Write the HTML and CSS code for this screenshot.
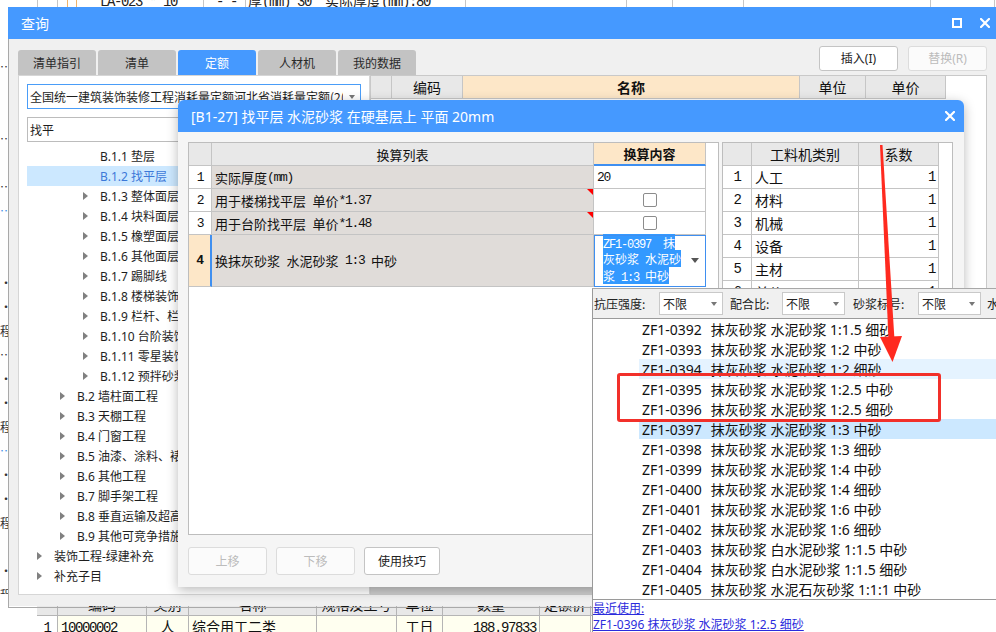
FILE: index.html
```html
<!DOCTYPE html>
<html lang="zh-CN">
<head>
<meta charset="utf-8">
<title>查询</title>
<link rel="stylesheet" href="styles.css">
</head>
<body>
<div class="app">
  <div class="topstrip">
    <div class="toprow">
      <div class="tc t1"></div>
      <div class="tc t2"></div>
      <div class="tc t3 orange"></div>
      <div class="tc t4 orange"></div>
      <div class="tc t5"><span class="m">LA-023 * 10</span></div>
      <div class="tc t6"><span class="m">- -</span></div>
      <div class="tc t7">厚<span class="m">(mm) 30  </span>实际厚度<span class="m">(mm):80</span></div>
      <div class="tc t8"></div>
      <div class="tc t9"></div>
      <div class="tc t10"></div>
      <div class="tc t11"></div>
      <div class="tc t12"></div>
    </div>
  </div>
  <div class="appmid">
    <div class="leftcol">
      <div class="lc"></div>
      <div class="lc"></div>
      <div class="lc">…</div>
      <div class="lc"></div>
      <div class="lc"></div>
      <div class="lc">…</div>
      <div class="lc"></div>
      <div class="lc">…</div>
      <div class="lc blue">…</div>
      <div class="lc"></div>
      <div class="lc"></div>
      <div class="lc">·</div>
      <div class="lc">·</div>
      <div class="lc">程</div>
      <div class="lc">…</div>
      <div class="lc">·</div>
      <div class="lc">·</div>
      <div class="lc">程</div>
      <div class="lc blue">…</div>
      <div class="lc">·</div>
      <div class="lc">·</div>
      <div class="lc">程</div>
      <div class="lc"></div>
      <div class="lc">·</div>
      <div class="lc">程</div>
    </div>
  </div>
  <div class="bottomtable">
    <div class="brow bhead">
      <div class="bc b0"></div>
      <div class="bc b1"></div>
      <div class="bc b2">编码</div>
      <div class="bc b3">类别</div>
      <div class="bc b4">名称</div>
      <div class="bc b5">规格及型号</div>
      <div class="bc b6">单位</div>
      <div class="bc b7">数量</div>
      <div class="bc b8">定额价</div>
      <div class="bc b9"></div>
    </div>
    <div class="brow bdata">
      <div class="bc b0"></div>
      <div class="bc b1 ctr"><span class="m">1</span></div>
      <div class="bc b2"><span class="m">10000002</span></div>
      <div class="bc b3 ctr">人</div>
      <div class="bc b4">综合用工二类</div>
      <div class="bc b5"></div>
      <div class="bc b6 ctr">工日</div>
      <div class="bc b7 rt"><span class="m">188.97833</span></div>
      <div class="bc b8"></div>
      <div class="bc b9"></div>
    </div>
  </div>
</div>

<div class="win outer">
  <div class="titlebar">
    <span class="ttext">查询</span>
    <span class="ico-max"></span>
    <svg class="ico-x" width="10" height="10" viewBox="0 0 10 10"><path d="M1 1 L9 9 M9 1 L1 9" stroke="#fff" stroke-width="2.2" stroke-linecap="square"/></svg>
  </div>
  <div class="obody">
    <div class="otop">
      <div class="tabs">
        <div class="tab">清单指引</div>
        <div class="tab">清单</div>
        <div class="tab active">定额</div>
        <div class="tab">人材机</div>
        <div class="tab">我的数据</div>
      </div>
      <div class="obtns">
        <div class="btn">插入(I)</div>
        <div class="btn disabled">替换(R)</div>
      </div>
    </div>
    <div class="omain">
      <div class="lpanel">
        <div class="combo"><span class="ctext">全国统一建筑装饰装修工程消耗量定额河北省消耗量定额(2(</span><span class="caret"></span></div>
        <div class="search">找平</div>
        <div class="tree">
          <div class="node l3"><span class="tw"></span>B.1.1 垫层</div>
          <div class="node l3 selected"><span class="tw"></span>B.1.2 找平层</div>
          <div class="node l3"><span class="tw tri"></span>B.1.3 整体面层</div>
          <div class="node l3"><span class="tw tri"></span>B.1.4 块料面层</div>
          <div class="node l3"><span class="tw tri"></span>B.1.5 橡塑面层</div>
          <div class="node l3"><span class="tw tri"></span>B.1.6 其他面层</div>
          <div class="node l3"><span class="tw tri"></span>B.1.7 踢脚线</div>
          <div class="node l3"><span class="tw tri"></span>B.1.8 楼梯装饰</div>
          <div class="node l3"><span class="tw tri"></span>B.1.9 栏杆、栏板装饰</div>
          <div class="node l3"><span class="tw tri"></span>B.1.10 台阶装饰</div>
          <div class="node l3"><span class="tw tri"></span>B.1.11 零星装饰项目</div>
          <div class="node l3"><span class="tw tri"></span>B.1.12 预拌砂浆</div>
          <div class="node l2"><span class="tw tri"></span>B.2 墙柱面工程</div>
          <div class="node l2"><span class="tw tri"></span>B.3 天棚工程</div>
          <div class="node l2"><span class="tw tri"></span>B.4 门窗工程</div>
          <div class="node l2"><span class="tw tri"></span>B.5 油漆、涂料、裱糊工程</div>
          <div class="node l2"><span class="tw tri"></span>B.6 其他工程</div>
          <div class="node l2"><span class="tw tri"></span>B.7 脚手架工程</div>
          <div class="node l2"><span class="tw tri"></span>B.8 垂直运输及超高增加费</div>
          <div class="node l2"><span class="tw tri"></span>B.9 其他可竞争措施项目</div>
          <div class="node l1"><span class="tw tri"></span>装饰工程-绿建补充</div>
          <div class="node l1"><span class="tw tri"></span>补充子目</div>
        </div>
      </div>
      <div class="rpanel">
        <div class="rhead">
          <div class="hc h0"></div>
          <div class="hc h1">编码</div>
          <div class="hc h2">名称</div>
          <div class="hc h3">单位</div>
          <div class="hc h4">单价</div>
        </div>
        <div class="hscroll"></div>
      </div>
    </div>
  </div>
</div>

<div class="win inner">
  <div class="titlebar ititle">
    <span class="ttext">[B1-27] 找平层 水泥砂浆 在硬基层上 平面 20mm</span>
    <svg class="ico-x" width="10" height="10" viewBox="0 0 10 10"><path d="M1 1 L9 9 M9 1 L1 9" stroke="#fff" stroke-width="2.2" stroke-linecap="square"/></svg>
  </div>
  <div class="ibody">
    <div class="grids">
      <div class="grid lgrid">
        <div class="grow">
          <div class="gc c-num gray"></div>
          <div class="gc c-list gray ctr">换算列表</div>
          <div class="gc c-val peach bold ctr hl">换算内容</div>
        </div>
        <div class="grow">
          <div class="gc c-num ctr"><span class="m">1</span></div>
          <div class="gc c-list shade">实际厚度<span class="m">(mm)</span></div>
          <div class="gc c-val"><span class="m">20</span></div>
        </div>
        <div class="grow">
          <div class="gc c-num ctr"><span class="m">2</span></div>
          <div class="gc c-list shade corner">用于楼梯找平层<span class="m"> </span>单价<span class="m">*1.37</span></div>
          <div class="gc c-val ctr"><span class="cbox"></span></div>
        </div>
        <div class="grow">
          <div class="gc c-num ctr"><span class="m">3</span></div>
          <div class="gc c-list shade corner">用于台阶找平层<span class="m"> </span>单价<span class="m">*1.48</span></div>
          <div class="gc c-val ctr"><span class="cbox"></span></div>
        </div>
        <div class="grow tall">
          <div class="gc c-num ctr num4"><span class="m">4</span></div>
          <div class="gc c-list shade">换抹灰砂浆<span class="m"> </span>水泥砂浆<span class="m"> 1:3 </span>中砂</div>
          <div class="gc c-val editing">
            <div class="seltext"><span class="hlt"><span class="m">ZF1-0397  </span>抹</span><br><span class="hlt">灰砂浆<span class="m"> </span>水泥砂</span><br><span class="hlt">浆<span class="m"> 1:3 </span>中砂</span></div>
            <span class="ddarrow"></span>
          </div>
        </div>
      </div>
      <div class="grid rgrid">
        <div class="grow">
          <div class="gc r-num gray"></div>
          <div class="gc r-name gray ctr">工料机类别</div>
          <div class="gc r-val gray ctr">系数</div>
        </div>
        <div class="grow"><div class="gc r-num ctr"><span class="m">1</span></div><div class="gc r-name">人工</div><div class="gc r-val rt"><span class="m">1</span></div></div>
        <div class="grow"><div class="gc r-num ctr"><span class="m">2</span></div><div class="gc r-name">材料</div><div class="gc r-val rt"><span class="m">1</span></div></div>
        <div class="grow"><div class="gc r-num ctr"><span class="m">3</span></div><div class="gc r-name">机械</div><div class="gc r-val rt"><span class="m">1</span></div></div>
        <div class="grow"><div class="gc r-num ctr"><span class="m">4</span></div><div class="gc r-name">设备</div><div class="gc r-val rt"><span class="m">1</span></div></div>
        <div class="grow"><div class="gc r-num ctr"><span class="m">5</span></div><div class="gc r-name">主材</div><div class="gc r-val rt"><span class="m">1</span></div></div>
        <div class="grow"><div class="gc r-num ctr"><span class="m">6</span></div><div class="gc r-name">单价</div><div class="gc r-val rt"><span class="m">1</span></div></div>
      </div>
    </div>
    <div class="ibtns">
      <div class="btn big disabled">上移</div>
      <div class="btn big disabled">下移</div>
      <div class="btn big narrow">使用技巧</div>
    </div>
  </div>
</div>

<div class="popup">
  <div class="filters">
    <span class="flbl f1">抗压强度:</span>
    <span class="fsel s1"><span>不限</span><span class="caret"></span></span>
    <span class="flbl f2">配合比:</span>
    <span class="fsel s2"><span>不限</span><span class="caret"></span></span>
    <span class="flbl f3">砂浆标号:</span>
    <span class="fsel s3"><span>不限</span><span class="caret"></span></span>
    <span class="flbl">水</span>
  </div>
  <div class="plist">
    <div class="pi"><span class="code">ZF1-0392</span>抹灰砂浆 水泥砂浆 1:1.5 细砂</div>
    <div class="pi"><span class="code">ZF1-0393</span>抹灰砂浆 水泥砂浆 1:2 中砂</div>
    <div class="pi hover"><span class="code">ZF1-0394</span>抹灰砂浆 水泥砂浆 1:2 细砂</div>
    <div class="pi"><span class="code">ZF1-0395</span>抹灰砂浆 水泥砂浆 1:2.5 中砂</div>
    <div class="pi"><span class="code">ZF1-0396</span>抹灰砂浆 水泥砂浆 1:2.5 细砂</div>
    <div class="pi cur"><span class="code">ZF1-0397</span>抹灰砂浆 水泥砂浆 1:3 中砂</div>
    <div class="pi"><span class="code">ZF1-0398</span>抹灰砂浆 水泥砂浆 1:3 细砂</div>
    <div class="pi"><span class="code">ZF1-0399</span>抹灰砂浆 水泥砂浆 1:4 中砂</div>
    <div class="pi"><span class="code">ZF1-0400</span>抹灰砂浆 水泥砂浆 1:4 细砂</div>
    <div class="pi"><span class="code">ZF1-0401</span>抹灰砂浆 水泥砂浆 1:6 中砂</div>
    <div class="pi"><span class="code">ZF1-0402</span>抹灰砂浆 水泥砂浆 1:6 细砂</div>
    <div class="pi"><span class="code">ZF1-0403</span>抹灰砂浆 白水泥砂浆 1:1.5 中砂</div>
    <div class="pi"><span class="code">ZF1-0404</span>抹灰砂浆 白水泥砂浆 1:1.5 细砂</div>
    <div class="pi"><span class="code">ZF1-0405</span>抹灰砂浆 水泥石灰砂浆 1:1:1 中砂</div>
  </div>
  <div class="pfoot">
    <span class="lnk">最近使用:</span>
    <span class="lnk">ZF1-0396 抹灰砂浆 水泥砂浆 1:2.5 细砂</span>
  </div>
</div>

<div class="redbox"></div>
<svg class="redarrow" width="40" height="230" viewBox="0 0 40 230">
  <polygon points="10,5 12.5,5 24.5,200 18.5,200" fill="#ff2a1f"/>
  <polygon points="10,197 32,196 22.5,222" fill="#ff2a1f"/>
</svg>
</body>
</html>
```

FILE: styles.css
```css
* { box-sizing: border-box; }
html, body { margin: 0; padding: 0; }
body {
  width: 996px;
  height: 632px;
  overflow: hidden;
  position: relative;
  background: #fff;
  font-family: "Noto Sans", "Noto Sans CJK SC", sans-serif;
  font-size: 12px;
  color: #1e1e1e;
}
.m {
  font-family: "Liberation Mono", monospace;
  font-size: 1em;
  letter-spacing: -0.1em;
  white-space: pre;
}

/* background application */
.app { display: flex; flex-direction: column; height: 632px; }
.topstrip { height: 7px; overflow: hidden; flex: none; }
.toprow {
  display: flex; height: 22px; margin-top: -11px;
  font-family: "Noto Sans CJK SC", sans-serif; font-size: 14px; line-height: 22px; color: #222;
}
.tc { flex: none; border-right: 1px solid #c6c6c6; white-space: nowrap; overflow: hidden; }
.tc.orange { border-right-color: #f1b46b; }
.t1 { width: 38px; } .t2 { width: 20px; } .t3 { width: 10px; } .t4 { width: 9px; }
.t5 { width: 127px; padding-left: 23px; } .t6 { width: 42px; padding-left: 12px; }
.t7 { width: 220px; padding-left: 2px; } .t8 { width: 161px; } .t9 { width: 46px; }
.t10 { width: 71px; } .t11 { width: 187px; } .t12 { width: 64px; }

.appmid { height: 587px; flex: none; display: flex; }
.leftcol { width: 20px; font-family: "Noto Sans CJK SC", sans-serif; font-size: 12px; color: #333; }
.lc { height: 24px; line-height: 24px; white-space: nowrap; }
.lc.blue { color: #3a8ee6; }

.bottomtable { flex: none; font-family: "Noto Sans CJK SC", sans-serif; font-size: 14px; color: #111; }
.brow { display: flex; height: 22px; }
.bc {
  flex: none; border-right: 1px solid #b5b5b5; border-bottom: 1px solid #b5b5b5;
  padding: 0 3px; white-space: nowrap; overflow: hidden; line-height: 21px;
}
.bc.b0 { width: 37px; border: none; }
.bhead .bc { background: #e8e8e8; text-align: center; }
.bhead .bc.b0 { background: #fff; }
.bdata .bc { background: #fffff0; }
.bdata .bc.b0, .bdata .bc.b1 { background: #fff; }
.b1 { width: 21px; } .b2 { width: 89px; } .b3 { width: 42px; } .b4 { width: 128px; }
.b5 { width: 80px; } .b6 { width: 46px; } .b7 { width: 97px; } .b8 { width: 51px; }
.bc.b9 { flex: 1; }
.bc.ctr { text-align: center; }
.bc.rt { text-align: right; }

/* windows */
.win { position: absolute; }
.titlebar {
  height: 32px; flex: none; background: #4599ff; color: #fff;
  display: flex; align-items: center; padding-left: 13px; font-size: 14px;
}
.ttext { flex: 1; white-space: nowrap; }
.ico-max { width: 10px; height: 10px; border: 2px solid #fff; margin-right: 18px; }
.ico-x { display: block; margin-right: 6px; }

.outer {
  left: 8px; top: 7px; width: 988px; height: 599px;
  background: #f0f0f0; display: flex; flex-direction: column;
}
.obody {
  flex: 1; display: flex; flex-direction: column;
  padding: 7px 9px 12px 9px;
  border-left: 1px solid #a9a9a9; border-bottom: 1px solid #a9a9a9;
}
.otop { display: flex; height: 29px; flex: none; }
.tabs { display: flex; gap: 2px; margin-top: 4px; }
.tab {
  width: 78px; height: 25px; background: #c3c3c3; border-radius: 3px 3px 0 0;
  text-align: center; line-height: 25px; font-size: 12px; color: #2a2a2a;
  font-family: "Noto Sans CJK SC", sans-serif;
}
.tab.active { background: #4599ff; color: #fff; }
.obtns { margin-left: auto; display: flex; gap: 10px; }
.btn {
  width: 79px; height: 25px; border: 1px solid #c4c4c4; border-radius: 3px; background: #fff;
  text-align: center; line-height: 23px; font-size: 12px; color: #222;
}
.btn.disabled { color: #bcbcbc; border-color: #dcdcdc; background: #fbfbfb; }
.btn.big { height: 28px; line-height: 26px; }
.btn.narrow { width: 76px; }

.omain { flex: 1; display: flex; min-height: 0; }
.lpanel {
  width: 352px; flex: none; background: #fff; border: 1px solid #d6d6d6;
  padding: 8px; overflow: hidden;
}
.combo {
  height: 25px; border: 1px solid #4a9df8; display: flex; align-items: center;
  padding: 0 5px 0 2px; white-space: nowrap; overflow: hidden; font-size: 12px;
  font-family: "Noto Sans CJK SC", sans-serif;
}
.ctext { flex: 1; overflow: hidden; }
.caret {
  flex: none; width: 0; height: 0; margin-left: 6px;
  border-top: 4px solid #777; border-left: 3.5px solid transparent; border-right: 3.5px solid transparent;
}
.search {
  height: 25px; margin-top: 8px; border: 1px solid #bcbcbc; line-height: 23px;
  padding-left: 2px; font-size: 12px; font-family: "Noto Sans CJK SC", sans-serif;
}
.tree { margin-top: 4px; }
.node {
  height: 20px; display: flex; align-items: center; white-space: nowrap;
  font-size: 12px; color: #1e1e1e;
}
.l1 { padding-left: 10px; } .l2 { padding-left: 33px; } .l3 { padding-left: 56px; }
.tw { width: 17px; flex: none; height: 8px; }
.tw.tri::before {
  content: ""; display: block; width: 0; height: 0;
  border-left: 5px solid #808080; border-top: 4px solid transparent; border-bottom: 4px solid transparent;
}
.node.selected { background: #cce8ff; color: #3c78d8; }

.rpanel {
  flex: 1; background: #fff; border: 1px solid #c9c9c9;
  display: flex; flex-direction: column;
}
.rhead { display: flex; height: 23px; font-family: "Noto Sans CJK SC", sans-serif; font-size: 14px; }
.hc {
  flex: none; border-right: 1px solid #c6c6c6; border-bottom: 1px solid #c6c6c6;
  background: #e8e8e8; text-align: center; line-height: 22px; color: #111;
}
.h0 { width: 21px; } .h1 { width: 71px; }
.h2 { width: 337px; background: #fde7c8; font-weight: bold; }
.h3 { width: 66px; } .h4 { width: 80px; }
.hscroll { margin-top: auto; height: 7px; background: #cdcdcd; }

/* inner dialog */
.inner {
  left: 178px; top: 100px; width: 786px; height: 487px;
  background: #f5f5f5; border-radius: 6px 6px 0 0;
  box-shadow: 0 3px 12px rgba(0, 0, 0, 0.28);
  display: flex; flex-direction: column;
}
.ititle { border-radius: 6px 6px 0 0; }
.ititle .ico-x { margin-right: 9px; }
.ibody { flex: 1; padding: 10px 11px 12px 10px; display: flex; flex-direction: column; }
.grids { display: flex; gap: 3px; height: 393px; flex: none; }
.grid { background: #fff; border: 1px solid #bdbdbd; font-family: "Noto Sans CJK SC", sans-serif; color: #111; }
.lgrid { width: 531px; font-size: 13px; }
.rgrid { width: 231px; font-size: 14px; }
.grow { display: flex; height: 23px; }
.grow.tall { height: 52px; }
.gc {
  flex: none; border-right: 1px solid #c4c4c4; border-bottom: 1px solid #c4c4c4;
  display: flex; align-items: center; padding: 0 3px; white-space: nowrap; position: relative;
}
.gc.ctr { justify-content: center; }
.gc.rt { justify-content: flex-end; }
.c-num { width: 23px; } .c-list { width: 382px; } .c-val { width: 112px; }
.r-num { width: 29px; } .r-name { width: 107px; } .r-val { width: 80px; }
.gray { background: #e8e8e8; }
.peach { background: #fde7c8; }
.bold { font-weight: bold; }
.hl { border-bottom: 2px solid #3f8ff0; }
.shade { background: #e0dcd9; }
.num4 { background: #fde7c8; font-weight: bold; border-right: 2px solid #3f8ff0; }
.corner::after {
  content: ""; position: absolute; right: 0; top: 0; width: 0; height: 0;
  border-top: 6px solid #ff0000; border-left: 6px solid transparent;
}
.cbox { width: 14px; height: 14px; border: 1px solid #8c8c8c; border-radius: 2px; background: #fff; }
.editing { outline: 1px solid #3f8ff0; outline-offset: -1px; padding: 0 6px 0 9px; }
.seltext { flex: 1; font-size: 12px; line-height: 14.5px; white-space: nowrap; }
.hlt { background: #3399ff; color: #fff; }
.ddarrow {
  flex: none; width: 0; height: 0;
  border-top: 5px solid #555; border-left: 4px solid transparent; border-right: 4px solid transparent;
}
.ibtns { margin-top: 12px; display: flex; gap: 9px; font-family: "Noto Sans CJK SC", sans-serif; }

/* dropdown popup */
.popup {
  position: absolute; left: 592px; top: 288px; width: 404px; height: 344px;
  background: #fff; border-left: 1px solid #9a9a9a; border-top: 1px solid #a8a8a8;
  display: flex; flex-direction: column;
}
.filters {
  height: 30px; flex: none; background: #f0f0f0; display: flex; align-items: center;
  border-bottom: 1px solid #9a9a9a; padding-left: 1px; white-space: nowrap;
  font-family: "Noto Sans CJK SC", sans-serif; font-size: 12px; color: #222;
}
.flbl { flex: none; }
.f1 { width: 65px; } .f2 { width: 52px; } .f3 { width: 65px; }
.fsel {
  flex: none; display: flex; align-items: center; justify-content: space-between;
  height: 23px; border: 1px solid #c9c9c9; background: #fff; padding: 0 5px 0 3px;
}
.s1 { width: 64px; margin-right: 7px; }
.s2 { width: 63px; margin-right: 8px; }
.s3 { width: 63px; margin-right: 6px; }
.plist { height: 281px; flex: none; border-bottom: 1px solid #9a9a9a; overflow: hidden; }
.pi {
  height: 20px; display: flex; align-items: center; margin-left: 46px; padding-left: 3px;
  font-size: 14px; white-space: pre; color: #111;
}
.pi.hover { background: #e5f3ff; }
.pi.cur { background: #cce8ff; }
.code { margin-right: 9px; }
.pfoot {
  padding-top: 1px; font-size: 12px; line-height: 16px;
  display: flex; flex-direction: column; align-items: flex-start;
}
.lnk { color: #2b2bdc; text-decoration: underline; white-space: nowrap; }

/* annotations */
.redbox {
  position: absolute; left: 617px; top: 373px; width: 324px; height: 49px;
  border: 3px solid #f2302a; border-radius: 3px;
}
.redarrow { position: absolute; left: 870px; top: 140px; }
```
